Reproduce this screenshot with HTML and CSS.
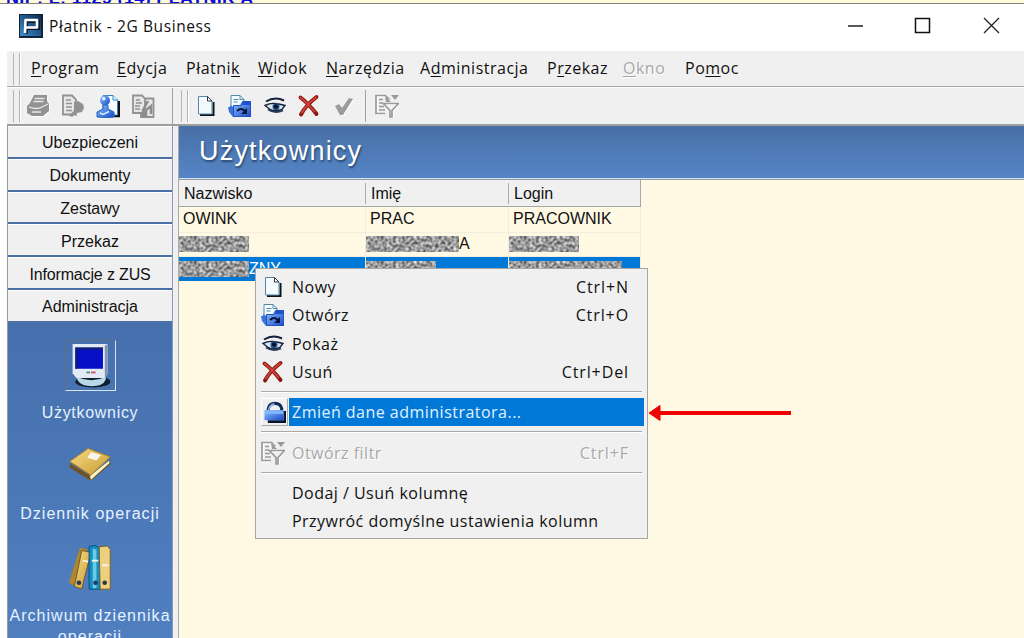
FILE: index.html
```html
<!DOCTYPE html>
<html lang="pl">
<head>
    <meta charset="UTF-8">
    <meta name="viewport" content="width=device-width, initial-scale=1.0">
    <title>Płatnik - 2G Business</title>
    <link rel="stylesheet" href="styles.css">
</head>
<body>
    <!-- shared icons -->
    <svg class="defs" width="0" height="0">
        <defs>
            <linearGradient id="blue" x1="0" y1="0" x2="1" y2="1">
                <stop offset="0" stop-color="#8fc4ff"/>
                <stop offset="1" stop-color="#1747c8"/>
            </linearGradient>
            <linearGradient id="gold" x1="0" y1="0" x2="1" y2="1">
                <stop offset="0" stop-color="#f7dc85"/>
                <stop offset="1" stop-color="#c89a35"/>
            </linearGradient>
            <linearGradient id="logo" x1="0" y1="1" x2="1" y2="0">
                <stop offset="0" stop-color="#3f8bc9"/>
                <stop offset="1" stop-color="#0d2c50"/>
            </linearGradient>
            <filter id="noise" x="0" y="0" width="100%" height="100%" color-interpolation-filters="sRGB">
                <feTurbulence type="fractalNoise" baseFrequency="0.33" numOctaves="1" seed="7"/>
                <feColorMatrix values="1.1 0 0 0 0.05  1.1 0 0 0 0.05  1.1 0 0 0 0.05  0 0 0 0 1"/>
            </filter>
            <symbol id="i-new" viewBox="0 0 24 24">
                <path d="M6 21h13.500V8" fill="none" stroke="#111" stroke-width="2"/>
                <path d="M4.500 2.500h9l4.500 4.500v13h-13.500z" fill="#f4fbff" stroke="#5289ab"/>
                <path d="M13.500 2.500v4.500h4.500z" fill="#fff" stroke="#334"/>
            </symbol>
            <symbol id="i-open" viewBox="0 0 24 24">
                <path d="M3 13V1.500h9l4 4V10" fill="#f4fbff" stroke="#5289ab"/>
                <path d="M12 1.500v4h4M5.500 5.500h5M5.500 8h4" fill="none" stroke="#5289ab"/>
                <path d="M0 13h2v-2l3 2v10l-4-5z" fill="#3974dd"/>
                <path d="M5 11h7l2-4h9v16H5z" fill="url(#blue)"/>
                <path d="M5.500 11.500H13L15 7.500h7.500v15h-17z" fill="none" stroke="#2452bd"/>
                <path d="M15 8h7v3h-8z" fill="#1b50cf"/>
                <path d="M9 17q4-4 8 0" fill="none" stroke="#061437" stroke-width="1.800"/>
                <path d="M19 14v6h-6z" fill="#061437"/>
            </symbol>
            <symbol id="i-eye" viewBox="0 0 24 24">
                <path d="M3 7.500Q12 2 21 6.500" fill="none" stroke="#14203c" stroke-width="2"/>
                <path d="M2 11.500q5-2.500 10-2t10 2l-3 4q-7 2.500-12 0z" fill="#d8e5ef" stroke="#14203c" stroke-width="1.400"/>
                <circle cx="13" cy="12.800" r="3.500" fill="#245282"/>
                <circle cx="13" cy="12.500" r="2" fill="#071020"/>
                <path d="M5 15.500q7 4.500 15 1" fill="none" stroke="#2b3c55" stroke-width="1.800"/>
            </symbol>
            <symbol id="i-del" viewBox="0 0 24 24">
                <path d="M3.500 3.500q8 6 16 16.500M19.500 3Q9 11 4 20.500" fill="none" stroke="#8e1713" stroke-width="3.900" stroke-linecap="round"/>
                <path d="M3.500 3.500q8 6 14 14M19 3.500Q10 10 5 18.500" fill="none" stroke="#cf433b" stroke-width="1.800" stroke-linecap="round"/>
            </symbol>
            <symbol id="i-check" viewBox="0 0 24 24">
                <path d="M4 13l2.500-2.500 3 4L17 4l4 1-10.500 16h-2z" fill="#fff" transform="translate(1 1)"/>
                <path d="M3 12l4-2 3 4L17 4l4 1-10 16h-3z" fill="#9b9b9b"/>
            </symbol>
            <symbol id="i-filter" viewBox="0 0 24 24">
                <g fill="none" stroke="#fff" stroke-width="1.500" transform="translate(1 1)">
                    <path d="M8 19.500H1V1.500h9.500l4 4"/>
                    <path d="M9 9.500h14L17 16.500v7h-2v-7z"/>
                </g>
                <g fill="none" stroke="#9a9a9a" stroke-width="1.700">
                    <path d="M10 19.500H1V1.500h9.500l4 4M4 5.500h4M4 9h4M4 12.500h5M4 16h6"/>
                    <path d="M8.500 9.500h15L17 16.500v6.500h-2v-6.500z"/>
                </g>
                <path d="M10 2l6 6h-5zM16 1h8l-4 5z" fill="#9a9a9a"/>
            </symbol>
            <symbol id="i-print" viewBox="0 0 24 24">
                <path d="M5 9L8 2h13v5l2 3v7l-6 5H6l-4-3v-7z" fill="#fff" transform="translate(1 1)"/>
                <path d="M4 9L8 1h13v6l2 3v7l-6 5H6l-5-3v-7z" fill="#929292"/>
                <path d="M8.500 4.500h10M7.500 7.500h10M3 13q8 3 13 0l6-3M6 18h9" fill="none" stroke="#e6e6e6" stroke-width="1.300"/>
            </symbol>
            <symbol id="i-send" viewBox="0 0 24 24">
                <path d="M2 1.500h9l4 4v15H2z" fill="#e8e8e8" stroke="#929292" stroke-width="1.800"/>
                <path d="M5 6h5M5 9.500h6M5 13h6M5 16.500h6" stroke="#929292" stroke-width="1.500"/>
                <path d="M13 8l4-1 5 3 1 4-2 4-5 1q-3 2-5 4l-4-2q5-2 6-5z" fill="#929292"/>
            </symbol>
            <symbol id="i-user" viewBox="0 0 24 24">
                <path d="M12 22h11V7" fill="none" stroke="#111" stroke-width="2.500"/>
                <path d="M7 1.500h10l4.500 4.500v15H7z" fill="#f5fbff" stroke="#3582c7"/>
                <path d="M17 1.500V6h4.500" fill="#dff" stroke="#3582c7"/>
                <circle cx="9" cy="6.500" r="5" fill="url(#blue)"/>
                <path d="M7 11h5v4l6 3v5q-8 1-17 0v-5l6-3z" fill="url(#blue)" stroke="#2765bd"/>
                <circle cx="7.800" cy="4.800" r="1.700" fill="#e6f6ff"/>
                <path d="M4 19l3 1.500 6-3" fill="none" stroke="#d3eeff" stroke-width="1.500"/>
            </symbol>
            <symbol id="i-sheets" viewBox="0 0 24 24">
                <path d="M2 1.500h9l3 3V19H2zM14 4.500h8.500V23H10v-4" fill="#e6e6e6" stroke="#929292" stroke-width="1.800"/>
                <path d="M5 6h4M5 9h6M4 12h5M4 15h5" stroke="#929292" stroke-width="1.500"/>
                <path d="M17 7l-5 9v5h3v-5l5-4v8" fill="none" stroke="#8d8d8d" stroke-width="2.500"/>
            </symbol>
            <symbol id="i-lock" viewBox="0 0 24 24">
                <path d="M5.500 12V8.500q1-5.500 7-5.500t7 5.500V12" fill="none" stroke="#102b62" stroke-width="3.200"/>
                <path d="M6 11V9q1-5 6-5.500" fill="none" stroke="#9fc6f5" stroke-width="1.300"/>
                <path d="M5 22h18V11" fill="none" stroke="#07122c" stroke-width="3"/>
                <path d="M1.500 10h20v10.500h-20z" fill="url(#blue)"/>
                <path d="M2 10.500h19v3.500H2z" fill="#7db7ff"/>
            </symbol>
        </defs>
    </svg>

    <div class="behind"><span>NIP: Ł: 1129 (14) PŁATNIK A</span></div>

    <div class="window">
        <div class="titlebar">
            <svg class="app-icon" viewBox="0 0 24 24">
                <rect width="24" height="24" fill="#10243c"/>
                <rect x="1" y="1" width="21" height="21" fill="url(#logo)"/>
                <path d="M7.500 19.500V7.500h12v7H9" fill="none" stroke="#081b31" stroke-width="3"/>
                <path d="M6 19l.5-13H18v7.500H7" fill="none" stroke="#fff" stroke-width="2.600" stroke-linejoin="round"/>
            </svg>
            <span class="title">Płatnik - 2G Business</span>
            <svg class="win-buttons" viewBox="0 0 154 20">
                <path d="M2 10h15" stroke="#222" stroke-width="1.500"/>
                <rect x="69.500" y="2.500" width="14" height="14" fill="none" stroke="#111" stroke-width="1.500"/>
                <path d="M138 2l15 15M153 2l-15 15" stroke="#222" stroke-width="1.300"/>
            </svg>
        </div>

        <div class="menubar">
            <i class="grip"></i>
            <span><u>P</u>rogram</span>
            <span><u>E</u>dycja</span>
            <span>Płatni<u>k</u></span>
            <span><u>W</u>idok</span>
            <span><u>N</u>arzędzia</span>
            <span>A<u>d</u>ministracja</span>
            <span>P<u>r</u>zekaz</span>
            <span class="off"><u>O</u>kno</span>
            <span>Po<u>m</u>oc</span>
        </div>

        <div class="toolbar">
            <div class="tools tools-left">
                <i class="grip"></i>
                <svg><use href="#i-print"/></svg>
                <svg><use href="#i-send"/></svg>
                <svg><use href="#i-user"/></svg>
                <svg><use href="#i-sheets"/></svg>
            </div>
            <div class="tools tools-main">
                <i class="grip"></i>
                <svg><use href="#i-new"/></svg>
                <svg><use href="#i-open"/></svg>
                <svg><use href="#i-eye"/></svg>
                <svg><use href="#i-del"/></svg>
                <svg><use href="#i-check"/></svg>
                <i class="divider"></i>
                <svg><use href="#i-filter"/></svg>
            </div>
        </div>

        <div class="main">
            <div class="sidebar">
                <div class="tab">Ubezpieczeni</div>
                <div class="tab">Dokumenty</div>
                <div class="tab">Zestawy</div>
                <div class="tab">Przekaz</div>
                <div class="tab narrow">Informacje z ZUS</div>
                <div class="tab">Administracja</div>
                <div class="group">
                    <div class="shortcut">
                        <div class="pic active">
                            <svg viewBox="0 0 50 50">
                                <ellipse cx="27" cy="42" rx="19" ry="6.500" fill="#111c2d"/>
                                <path d="M10 37q15 7 31 0v3q-3 7-15 7T10 40z" fill="#b8d9e8"/>
                                <path d="M5 1h38v32l-3 5H9l-4-5z" fill="#e3eaf5"/>
                                <path d="M43 1v32l-3 5V3z" fill="#8293ab"/>
                                <path d="M8 5h30v23H8z" fill="#0710c4"/>
                                <path d="M8 5h30v2H10v21H8z" fill="#122069"/>
                                <path d="M20 32h4" stroke="#4b9b79" stroke-width="2"/>
                                <path d="M25 32h5" stroke="#ca5466" stroke-width="2"/>
                            </svg>
                        </div>
                        <span class="tight">Użytkownicy</span>
                    </div>
                    <div class="shortcut">
                        <div class="pic">
                            <svg viewBox="0 0 50 50">
                                <path d="M3 22l23 14 21-18v5L26 41 3 27z" fill="#6e5423"/>
                                <path d="M25 36l21-17v3L26 40z" fill="#fff6bd"/>
                                <path d="M3 20L23 6l24 9-21 20z" fill="url(#gold)" stroke="#a77d25"/>
                                <path d="M26 10l11 3-5 6-10-3z" fill="#f7f5ec"/>
                            </svg>
                        </div>
                        <span>Dziennik operacji</span>
                    </div>
                    <div class="shortcut">
                        <div class="pic">
                            <svg viewBox="0 0 50 50">
                                <path d="M14 3l8 2-10 41-10-5z" fill="#af862e"/>
                                <path d="M16 6l10 2-10 40-8-3z" fill="url(#gold)" stroke="#685324"/>
                                <path d="M24 2l6-2 6 4v44H24z" fill="#168fc0" stroke="#064b78"/>
                                <path d="M28 4l4 1v42h-4z" fill="#67cce9"/>
                                <path d="M35 2l9-1 3 4v43H36z" fill="#edcf7e" stroke="#73571e"/>
                                <path d="M17 17l6 1M27 17h7M38 22h7" stroke="#f7f5e7" stroke-width="2"/>
                                <circle cx="13" cy="41" r="2.500" fill="#29394c"/>
                                <circle cx="31" cy="41" r="2.500" fill="#173b6e"/>
                                <circle cx="41" cy="41" r="2.500" fill="#29394c"/>
                            </svg>
                        </div>
                        <span>Archiwum dziennika operacji</span>
                    </div>
                </div>
            </div>

            <div class="content">
                <h1>Użytkownicy</h1>
                <div class="table">
                    <div class="row head"><span>Nazwisko</span><span>Imię</span><span>Login</span></div>
                    <div class="row"><span>OWINK</span><span>PRAC</span><span>PRACOWNIK</span></div>
                    <div class="row hidden-data">
                        <span><svg width="70" height="16"><rect width="70" height="16" filter="url(#noise)"/></svg></span>
                        <span><svg width="93" height="16"><rect width="93" height="16" filter="url(#noise)"/></svg>A</span>
                        <span><svg width="70" height="16"><rect width="70" height="16" filter="url(#noise)"/></svg></span>
                    </div>
                    <div class="row hidden-data selected">
                        <span><svg width="70" height="16"><rect width="70" height="16" filter="url(#noise)"/></svg>ZNY</span>
                        <span><svg width="70" height="16"><rect width="70" height="16" filter="url(#noise)"/></svg></span>
                        <span><svg width="113" height="16"><rect width="113" height="16" filter="url(#noise)"/></svg></span>
                    </div>
                </div>
            </div>
        </div>
    </div>

    <div class="context-menu">
        <div class="item"><svg><use href="#i-new"/></svg><span>Nowy</span><kbd>Ctrl+N</kbd></div>
        <div class="item"><svg><use href="#i-open"/></svg><span>Otwórz</span><kbd>Ctrl+O</kbd></div>
        <div class="item"><svg><use href="#i-eye"/></svg><span>Pokaż</span></div>
        <div class="item"><svg><use href="#i-del"/></svg><span>Usuń</span><kbd>Ctrl+Del</kbd></div>
        <hr>
        <div class="item current"><svg><use href="#i-lock"/></svg><span>Zmień dane administratora...</span></div>
        <hr>
        <div class="item off"><svg><use href="#i-filter"/></svg><span>Otwórz filtr</span><kbd>Ctrl+F</kbd></div>
        <hr>
        <div class="item"><i></i><span>Dodaj / Usuń kolumnę</span></div>
        <div class="item"><i></i><span>Przywróć domyślne ustawienia kolumn</span></div>
    </div>

    <svg class="arrow" viewBox="0 0 144 18">
        <path d="M10 9h133" stroke="#f00000" stroke-width="4"/>
        <path d="M1 9L12 1.500v15z" fill="#f00000" stroke="#f00000" stroke-linejoin="round"/>
    </svg>
</body>
</html>
```
FILE: styles.css
```css
* {
    box-sizing: border-box;
    margin: 0;
    padding: 0;
}

body {
    width: 1024px;
    height: 638px;
    overflow: hidden;
    background: #fff;
    color: #111;
    font-family: "Open Sans", "Noto Sans", sans-serif;
    font-size: 16px;
}

.defs {
    position: absolute;
}

.behind {
    height: 3px;
    overflow: hidden;
    background: #fefbdc;
    color: #0a0ae0;
    font: bold 18px/18px "Liberation Sans", sans-serif;
    letter-spacing: 0.350px;
    padding-left: 6px;
    white-space: nowrap;
}

.behind span {
    display: block;
    margin-top: -11px;
}

.window {
    height: 635px;
    border-top: 1px solid #85857c;
    display: flex;
    flex-direction: column;
}

/* title bar */
.titlebar {
    height: 47px;
    display: flex;
    align-items: center;
    padding: 0 24px 3px 19px;
    flex-shrink: 0;
}

.app-icon {
    width: 24px;
    height: 24px;
    margin-right: 6px;
}

.title {
    font-size: 15.500px;
    letter-spacing: 0.600px;
    flex: 1;
}

.win-buttons {
    width: 154px;
    height: 20px;
}

/* menu */
.menubar {
    height: 36px;
    flex-shrink: 0;
    margin-left: 7px;
    background: #f0f0f0;
    border-bottom: 1px solid #a5a5a5;
    display: grid;
    grid-template-columns: 24px 86px 69px 72px 68px 94px 127px 76px 62px 80px;
    align-items: center;
    letter-spacing: 0.500px;
}

.menubar span {
    margin-top: -1px;
}

.menubar u {
    text-decoration-thickness: 1px;
    text-underline-offset: 2px;
}

.grip {
    width: 7px;
    height: 32px;
    margin-left: 6px;
    border: 1px solid #b4b4b4;
    border-width: 0 1px;
    box-shadow: 1px 0 #fff;
    flex-shrink: 0;
}

.off {
    color: #a8a8a8;
    text-shadow: 1px 1px #fff;
}

.toolbar {
    height: 39px;
    flex-shrink: 0;
    margin-left: 7px;
    background: #f0f0f0;
    border-top: 1px solid #fff;
    border-bottom: 2px solid #9d9f9f;
    display: flex;
}

.tools {
    display: flex;
    align-items: center;
}

.tools svg {
    width: 24px;
    height: 24px;
}

.tools-left {
    width: 166px;
    border-right: 1px solid #a0a0a0;
    gap: 11px;
}

.tools-left .grip {
    margin-right: -5px;
}

.tools-main {
    gap: 10.500px;
    padding-left: 2px;
}

.tools-main .grip {
    margin-right: -5px;
}

.divider {
    width: 1px;
    height: 32px;
    background: #a0a0a0;
    margin: 0 -2px 0 -1px;
}

.main {
    flex: 1;
    min-height: 0;
    display: flex;
    padding-left: 7px;
}

/* sidebar */
.sidebar {
    width: 166px;
    border-left: 1px solid #9a9a9a;
    border-right: 1px solid #8a9ab2;
    display: flex;
    flex-direction: column;
    font-family: "Liberation Sans", sans-serif;
    overflow: hidden;
}

.tab {
    height: 32.800px;
    flex-shrink: 0;
    background: #f0f0f0;
    border-bottom: 2px solid #4c6fa6;
    border-top: 1px solid #fff;
    padding-top: 3px;
    display: flex;
    align-items: center;
    justify-content: center;
}

.narrow {
    letter-spacing: -0.150px;
}

.group {
    flex: 1;
    background: linear-gradient(#4670ad, #507fc0);
    color: #e6f2ff;
    padding-top: 17px;
    text-align: center;
}

.shortcut {
    height: 101.500px;
}

.shortcut span {
    display: block;
    margin: 11px -4px 0;
    line-height: 21px;
    letter-spacing: 1.050px;
}

.shortcut .tight {
    letter-spacing: 0.700px;
}

.pic {
    width: 51px;
    height: 51px;
    margin: 0 auto;
    padding: 2px;
}

.pic svg {
    width: 46px;
    height: 46px;
}

.active {
    border: 1px solid #5f6f87;
    border-right-color: #d8e4f2;
    border-bottom-color: #d8e4f2;
}

/* content */
.content {
    flex: 1;
    margin-left: 5px;
    border-left: 1px solid #aaa;
    background: #fff9e3;
    box-shadow: -5px 0 #f0f0f0;
}

h1 {
    height: 53px;
    background: linear-gradient(#486fa5, #5585c7);
    border-bottom: 1px solid #d5e2ee;
    color: #fff;
    font: 27px/50px "Liberation Sans", sans-serif;
    letter-spacing: 1.200px;
    padding-left: 20px;
    text-shadow: 1px 2px 2px #29496f;
}

.table {
    border-top: 1px solid #909aa0;
    font-family: "Liberation Sans", sans-serif;
}

.row {
    display: grid;
    grid-template-columns: 187px 143px 132px;
    width: 462px;
    height: 25.500px;
    line-height: 24px;
}

.row span {
    padding-left: 4px;
    border-right: 1px solid #f1eee0;
    border-bottom: 1px solid #f1eee0;
    white-space: nowrap;
}

.row.head {
    height: 27px;
    background: #f0f0f0;
    border: 1px solid #a7a7a7;
    border-width: 0 1px 1px 0;
    padding: 3px 0;
    line-height: 21px;
}

.row.head span {
    padding-left: 5px;
    border-bottom: 0;
    border-right-color: #aaa;
}

.row.head span:last-child {
    border-right: 0;
}

.row.hidden-data span {
    padding-left: 0;
    display: flex;
    align-items: center;
}

.row.hidden-data {
    line-height: 20px;
    margin-top: -1px;
}

.row.hidden-data.selected {
    height: 24px;
    margin-top: 0;
    background: #0078d7;
    color: #fff;
}

.row.selected span {
    border-bottom: 0;
}

/* popup menu */
.context-menu {
    position: absolute;
    left: 255px;
    top: 268px;
    width: 393px;
    height: 271px;
    padding: 4px 3px 4px 5px;
    background: #f0f0f0;
    border: 1px solid #a6a6a6;
}

.item {
    display: flex;
    align-items: center;
    height: 28.300px;
    white-space: nowrap;
}

.item svg,
.item i {
    width: 24px;
    height: 24px;
    margin-right: 4px;
}

.item span {
    flex: 1;
    padding-left: 3px;
    letter-spacing: 0.480px;
}

.item kbd {
    font: inherit;
    letter-spacing: 0.900px;
    padding-right: 15px;
}

hr {
    height: 2px;
    margin: 5px 2px 5px 0;
    border: 0;
    border-top: 1px solid #aaa;
    border-bottom: 1px solid #fff;
}

.current svg {
    width: 27px;
    height: 28px;
    margin-right: 1px;
    padding: 1px;
    border: 1px solid #fff;
    border-right-color: #aaa;
    border-bottom-color: #aaa;
}

.current span {
    height: 28px;
    line-height: 28px;
    background: #0078d7;
    color: #e4f2ff;
}

.item.off {
    height: 28.500px;
}

.arrow {
    position: absolute;
    left: 648px;
    top: 404px;
    width: 144px;
    height: 18px;
}
```
